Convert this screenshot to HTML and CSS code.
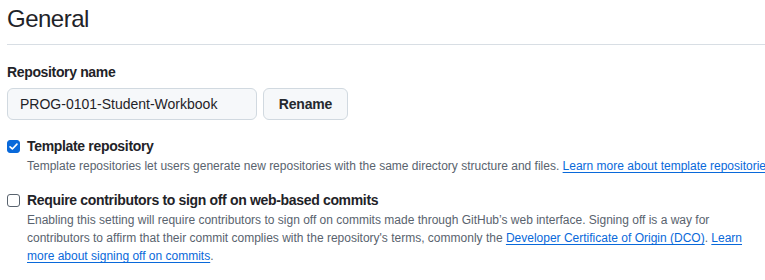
FILE: index.html
```html
<!DOCTYPE html>
<html lang="en">
<head>
<meta charset="utf-8">
<title>General</title>
<link rel="stylesheet" href="styles.css">
</head>
<body>
<main class="page">
  <div class="subhead">
    <h2 class="subhead-heading">General</h2>
  </div>

  <div class="form-group">
    <label class="form-label" for="repo-name">Repository name</label>
    <div class="rename-row">
      <input class="form-control" id="repo-name" type="text" value="PROG-0101-Student-Workbook">
      <button class="btn" type="button">Rename</button>
    </div>
  </div>

  <div class="form-checkbox first">
    <span class="checkbox checked">
      <svg viewBox="0 0 16 16" width="11" height="11" aria-hidden="true"><path d="M3 8.4 6.4 11.6 13 4.6" fill="none" stroke="#fff" stroke-width="2.4" stroke-linecap="round" stroke-linejoin="round"/></svg>
    </span>
    <div class="checkbox-body">
      <div class="checkbox-label">Template repository</div>
      <p class="note nowrap">Template repositories let users generate new repositories with the same directory structure and files. <a href="#">Learn more about template repositories</a>.</p>
    </div>
  </div>

  <div class="form-checkbox second">
    <span class="checkbox"></span>
    <div class="checkbox-body">
      <div class="checkbox-label">Require contributors to sign off on web-based commits</div>
      <p class="note">Enabling this setting will require contributors to sign off on commits made through GitHub’s web interface. Signing off is a way for<br>contributors to affirm that their commit complies with the repository's terms, commonly the <a href="#">Developer Certificate of Origin (DCO)</a>. <a href="#">Learn<br>more about signing off on commits</a>.</p>
    </div>
  </div>
</main>
</body>
</html>
```

FILE: styles.css
```css
html, body {
  margin: 0;
  padding: 0;
  background: #ffffff;
  overflow: hidden;
}

body {
  font-family: "Liberation Sans", Arial, sans-serif;
  color: #1f2328;
}

.page {
  width: 790px;
  padding-left: 7px;
}

.subhead {
  border-bottom: 1px solid #d8dee4;
  height: 45px;
  box-sizing: border-box;
}

.subhead-heading {
  margin: 0;
  padding-top: 4px;
  font-size: 24px;
  font-weight: 400;
  line-height: 30px;
  letter-spacing: -0.5px;
}

.form-group {
  margin-top: 17px;
}

.form-label {
  display: block;
  font-size: 14px;
  font-weight: 600;
  line-height: 20px;
  letter-spacing: -0.35px;
}

.rename-row {
  display: flex;
  gap: 6px;
  margin-top: 6px;
}

.form-control {
  box-sizing: border-box;
  width: 250px;
  height: 32px;
  padding: 0 12px;
  font: inherit;
  font-size: 14px;
  color: #1f2328;
  background: #f6f8fa;
  border: 1px solid #d1d9e0;
  border-radius: 6px;
}

.btn {
  box-sizing: border-box;
  width: 85px;
  height: 32px;
  font: inherit;
  font-size: 14px;
  font-weight: 600;
  letter-spacing: -0.2px;
  color: #25292e;
  background: #f6f8fa;
  border: 1px solid #d1d9e0;
  border-radius: 6px;
}

.form-checkbox {
  display: flex;
  gap: 7px;
}

.form-checkbox.first {
  margin-top: 17px;
}

.form-checkbox.second {
  margin-top: 16px;
}

.checkbox {
  flex: none;
  box-sizing: border-box;
  width: 13px;
  height: 13px;
  margin-top: 3px;
  border: 1px solid #59636e;
  border-radius: 3px;
  background: #fff;
  display: flex;
  align-items: center;
  justify-content: center;
}

.checkbox.checked {
  background: #0969da;
  border-color: #0969da;
}

.checkbox-label {
  font-size: 14px;
  font-weight: 600;
  line-height: 18px;
  letter-spacing: -0.33px;
}

.note {
  margin: 2px 0 0;
  font-size: 12px;
  line-height: 18px;
  color: #59636e;
}

.note.nowrap {
  white-space: nowrap;
}

.note a {
  color: #0969da;
  text-decoration: underline;
  text-underline-offset: 2px;
}
```
